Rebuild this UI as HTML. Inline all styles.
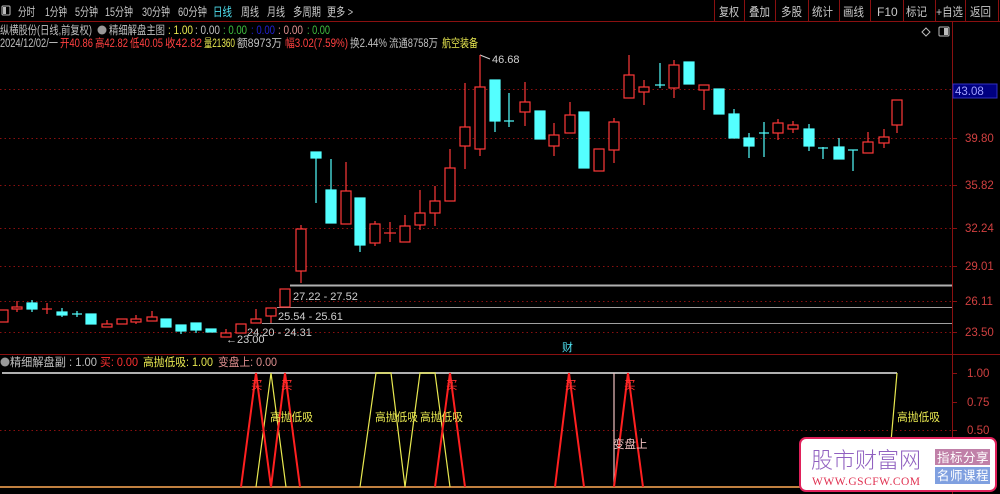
<!DOCTYPE html>
<html><head><meta charset="utf-8"><style>
html,body{margin:0;padding:0;background:#000;width:1000px;height:494px;overflow:hidden}
svg{display:block;font-family:"Liberation Sans","Noto Sans CJK SC",sans-serif}
</style></head><body>
<svg width="1000" height="494" viewBox="0 0 1000 494" xmlns="http://www.w3.org/2000/svg">
<rect width="1000" height="494" fill="#000"/>
<!-- top bar -->
<line x1="0" y1="21.5" x2="1000" y2="21.5" stroke="#8a1010"/>
<rect x="2" y="6" width="8" height="9" fill="none" stroke="#bbb" rx="1"/><rect x="3" y="7" width="3" height="7" fill="#bbb"/>
<g font-size="12" fill="#c8c8c8" lengthAdjust="spacingAndGlyphs">
<text x="18" y="16" textLength="17" lengthAdjust="spacingAndGlyphs">分时</text>
<text x="45" y="16" textLength="22" lengthAdjust="spacingAndGlyphs">1分钟</text>
<text x="75" y="16" textLength="23" lengthAdjust="spacingAndGlyphs">5分钟</text>
<text x="105" y="16" textLength="28" lengthAdjust="spacingAndGlyphs">15分钟</text>
<text x="142" y="16" textLength="28" lengthAdjust="spacingAndGlyphs">30分钟</text>
<text x="178" y="16" textLength="29" lengthAdjust="spacingAndGlyphs">60分钟</text>
<text x="213" y="16" fill="#4fe0f0" textLength="19" lengthAdjust="spacingAndGlyphs">日线</text>
<text x="241" y="16" textLength="18" lengthAdjust="spacingAndGlyphs">周线</text>
<text x="267" y="16" textLength="18" lengthAdjust="spacingAndGlyphs">月线</text>
<text x="293" y="16" textLength="28" lengthAdjust="spacingAndGlyphs">多周期</text>
<text x="327" y="16" textLength="26" lengthAdjust="spacingAndGlyphs">更多 &gt;</text>
</g>
<g stroke="#8a1010"><line x1="714.5" y1="0" x2="714.5" y2="21"/><line x1="744.5" y1="0" x2="744.5" y2="21"/><line x1="775.5" y1="0" x2="775.5" y2="21"/><line x1="808.5" y1="0" x2="808.5" y2="21"/><line x1="839.5" y1="0" x2="839.5" y2="21"/><line x1="870.5" y1="0" x2="870.5" y2="21"/><line x1="903.5" y1="0" x2="903.5" y2="21"/><line x1="935.5" y1="0" x2="935.5" y2="21"/><line x1="965.5" y1="0" x2="965.5" y2="21"/><line x1="998.5" y1="0" x2="998.5" y2="21"/></g>
<g font-size="12" fill="#c8c8c8">
<text x="719" y="16" textLength="20" lengthAdjust="spacingAndGlyphs">复权</text><text x="749" y="16" textLength="21" lengthAdjust="spacingAndGlyphs">叠加</text><text x="781" y="16" textLength="21" lengthAdjust="spacingAndGlyphs">多股</text><text x="812" y="16" textLength="21" lengthAdjust="spacingAndGlyphs">统计</text><text x="843" y="16" textLength="21" lengthAdjust="spacingAndGlyphs">画线</text><text x="877" y="16">F10</text><text x="906" y="16" textLength="21" lengthAdjust="spacingAndGlyphs">标记</text><text x="936" y="16" textLength="27" lengthAdjust="spacingAndGlyphs">+自选</text><text x="970" y="16" textLength="21" lengthAdjust="spacingAndGlyphs">返回</text>
</g>
<!-- info lines -->
<g font-size="11.5">
<text x="0" y="34" fill="#c0c0c0" textLength="92" lengthAdjust="spacingAndGlyphs">纵横股份(日线,前复权)</text>
<circle cx="102" cy="30" r="4.5" fill="#999"/>
<text x="109" y="34" fill="#c0c0c0" textLength="56" lengthAdjust="spacingAndGlyphs">精细解盘主图</text>
<text x="168" y="34" fill="#e8e850" textLength="25" lengthAdjust="spacingAndGlyphs">: 1.00</text>
<text x="195" y="34" fill="#c0c0c0" textLength="25" lengthAdjust="spacingAndGlyphs">: 0.00</text>
<text x="223" y="34" fill="#40c040" textLength="24" lengthAdjust="spacingAndGlyphs">: 0.00</text>
<text x="251" y="34" fill="#2020d0" textLength="24" lengthAdjust="spacingAndGlyphs">: 0.00</text>
<text x="278" y="34" fill="#e09090" textLength="25" lengthAdjust="spacingAndGlyphs">: 0.00</text>
<text x="307" y="34" fill="#40c040" textLength="23" lengthAdjust="spacingAndGlyphs">: 0.00</text>
<text x="0" y="47" fill="#c0c0c0" textLength="58" lengthAdjust="spacingAndGlyphs">2024/12/02/一</text>
<text x="60" y="47" fill="#ff4040" textLength="33" lengthAdjust="spacingAndGlyphs">开40.86</text>
<text x="95" y="47" fill="#ff4040" textLength="33" lengthAdjust="spacingAndGlyphs">高42.82</text>
<text x="130" y="47" fill="#ff4040" textLength="33" lengthAdjust="spacingAndGlyphs">低40.05</text>
<text x="165" y="47" fill="#ff4040" textLength="37" lengthAdjust="spacingAndGlyphs">收42.82</text>
<text x="204" y="47" fill="#e8e850" textLength="31" lengthAdjust="spacingAndGlyphs">量21360</text>
<text x="237" y="47" fill="#c0c0c0" textLength="45" lengthAdjust="spacingAndGlyphs">额8973万</text>
<text x="285" y="47" fill="#ff4040" textLength="63" lengthAdjust="spacingAndGlyphs">幅3.02(7.59%)</text>
<text x="350" y="47" fill="#c0c0c0" textLength="37" lengthAdjust="spacingAndGlyphs">换2.44%</text>
<text x="389" y="47" fill="#c0c0c0" textLength="49" lengthAdjust="spacingAndGlyphs">流通8758万</text>
<text x="442" y="47" fill="#e8e850" textLength="36" lengthAdjust="spacingAndGlyphs">航空装备</text>
</g>
<path d="M922 32 l4 -4 4 4 -4 4z" fill="none" stroke="#bbb"/>
<rect x="939" y="27" width="10" height="9" fill="none" stroke="#bbb" rx="1"/><rect x="944" y="28" width="4" height="7" fill="#bbb"/>
<!-- axis -->
<line x1="952.5" y1="22" x2="952.5" y2="494" stroke="#8a1010"/>
<g stroke="#8a1010" stroke-dasharray="1.5 3">
<line x1="0" y1="89.5" x2="952" y2="89.5"/><line x1="0" y1="138.5" x2="952" y2="138.5"/><line x1="0" y1="185.5" x2="952" y2="185.5"/><line x1="0" y1="228.5" x2="952" y2="228.5"/><line x1="0" y1="266.5" x2="952" y2="266.5"/><line x1="0" y1="301.5" x2="952" y2="301.5"/><line x1="0" y1="332.5" x2="952" y2="332.5"/>
<line x1="0" y1="430.5" x2="952" y2="430.5"/>
</g>
<g stroke="#8a1010"><line x1="952" y1="138.5" x2="957" y2="138.5"/><line x1="952" y1="185.5" x2="957" y2="185.5"/><line x1="952" y1="228.5" x2="957" y2="228.5"/><line x1="952" y1="266.5" x2="957" y2="266.5"/><line x1="952" y1="301.5" x2="957" y2="301.5"/><line x1="952" y1="332.5" x2="957" y2="332.5"/><line x1="952" y1="373.5" x2="957" y2="373.5"/><line x1="952" y1="402.5" x2="957" y2="402.5"/><line x1="952" y1="430.5" x2="957" y2="430.5"/></g>
<g font-size="11.5" fill="#d04040">
<text x="965" y="142">39.80</text><text x="965" y="189">35.82</text><text x="965" y="232">32.24</text><text x="965" y="270">29.01</text><text x="965" y="305">26.11</text><text x="965" y="336">23.50</text>
<text x="967" y="377">1.00</text><text x="967" y="406">0.75</text><text x="967" y="434">0.50</text>
</g>
<rect x="953" y="84" width="44" height="14" fill="#000080" stroke="#3030c0"/>
<text x="955" y="95" font-size="11.5" fill="#a0a0ff">43.08</text>
<!-- support lines -->
<line x1="290" y1="285.5" x2="952" y2="285.5" stroke="#b0b0b0" stroke-width="2"/>
<line x1="277" y1="307.5" x2="952" y2="307.5" stroke="#a0a0a0"/>
<line x1="262" y1="323.5" x2="952" y2="323.5" stroke="#a0a0a0"/>
<g font-size="11" fill="#d0d0d0">
<text x="293" y="300">27.22 - 27.52</text><text x="278" y="320">25.54 - 25.61</text><text x="247" y="336">24.20 - 24.31</text><text x="226" y="343">←23.00</text><text x="492" y="63">46.68</text>
</g>
<path d="M480 55 l10 4" stroke="#d0d0d0" fill="none"/>
<!-- candles -->
<g stroke-width="1.2">
<g stroke="#ff3838" fill="#000">
<rect x="-2" y="310" width="10" height="12"/>
<line x1="17" y1="301" x2="17" y2="312"/><rect x="12" y="307" width="10" height="2"/>
<line x1="47" y1="303" x2="47" y2="314"/><line x1="42" y1="309" x2="52" y2="309"/>
<line x1="107" y1="320" x2="107" y2="324"/><rect x="102" y="324" width="10" height="3"/>
<rect x="117" y="319" width="10" height="5"/>
<line x1="136" y1="315" x2="136" y2="324"/><rect x="131" y="319" width="10" height="3"/>
<line x1="152" y1="311" x2="152" y2="317"/><rect x="147" y="317" width="10" height="4"/>
<line x1="226" y1="329" x2="226" y2="333"/><rect x="221" y="333" width="10" height="4"/>
<rect x="236" y="324" width="10" height="9"/>
<line x1="256" y1="309" x2="256" y2="319"/><rect x="251" y="319" width="10" height="4"/>
<line x1="271" y1="316" x2="271" y2="323"/><rect x="266" y="308" width="10" height="8"/>
<rect x="280" y="289" width="10" height="18"/>
<line x1="301" y1="225" x2="301" y2="283"/><rect x="296" y="229" width="10" height="42"/>
<line x1="346" y1="162" x2="346" y2="191"/><rect x="341" y="191" width="10" height="33"/>
<line x1="375" y1="221" x2="375" y2="246"/><rect x="370" y="224" width="10" height="19"/>
<line x1="390" y1="222" x2="390" y2="242"/><line x1="384" y1="233" x2="396" y2="233"/>
<line x1="405" y1="215" x2="405" y2="226"/><rect x="400" y="226" width="10" height="16"/>
<line x1="420" y1="190" x2="420" y2="230"/><rect x="415" y="213" width="10" height="12"/>
<line x1="435" y1="186" x2="435" y2="226"/><rect x="430" y="201" width="10" height="12"/>
<line x1="450" y1="149" x2="450" y2="168"/><rect x="445" y="168" width="10" height="33"/>
<line x1="465" y1="83" x2="465" y2="169"/><rect x="460" y="127" width="10" height="19"/>
<line x1="480" y1="55" x2="480" y2="156"/><rect x="475" y="87" width="10" height="62"/>
<line x1="525" y1="82" x2="525" y2="126"/><rect x="520" y="102" width="10" height="10"/>
<line x1="554" y1="123" x2="554" y2="156"/><rect x="549" y="135" width="10" height="11"/>
<line x1="570" y1="102" x2="570" y2="115"/><rect x="565" y="115" width="10" height="18"/>
<rect x="594" y="149" width="10" height="22"/>
<line x1="614" y1="118" x2="614" y2="163"/><rect x="609" y="122" width="10" height="28"/>
<line x1="629" y1="55" x2="629" y2="75"/><rect x="624" y="75" width="10" height="23"/>
<line x1="644" y1="80" x2="644" y2="105"/><rect x="639" y="87" width="10" height="5"/>
<line x1="674" y1="60" x2="674" y2="98"/><rect x="669" y="65" width="10" height="23"/>
<line x1="704" y1="90" x2="704" y2="110"/><rect x="699" y="85" width="10" height="5"/>
<line x1="778" y1="119" x2="778" y2="140"/><rect x="773" y="123" width="10" height="10"/>
<line x1="793" y1="121" x2="793" y2="133"/><rect x="788" y="125" width="10" height="4"/>
<line x1="868" y1="132" x2="868" y2="142"/><rect x="863" y="142" width="10" height="11"/>
<line x1="884" y1="129" x2="884" y2="148"/><rect x="879" y="137" width="10" height="6"/>
<line x1="897" y1="125" x2="897" y2="133"/><rect x="892" y="100" width="10" height="25"/>
</g>
<g stroke="#54ffff" fill="#54ffff">
<rect x="27" y="303" width="10" height="6"/><line x1="32" y1="300" x2="32" y2="312"/>
<rect x="57" y="312" width="10" height="3"/><line x1="62" y1="308" x2="62" y2="317"/>
<line x1="72" y1="314" x2="82" y2="314"/><line x1="77" y1="311" x2="77" y2="317"/>
<rect x="86" y="314" width="10" height="10"/>
<rect x="161" y="319" width="10" height="8"/>
<rect x="176" y="325" width="10" height="6"/><line x1="181" y1="331" x2="181" y2="334"/>
<rect x="191" y="323" width="10" height="7"/><line x1="196" y1="330" x2="196" y2="333"/>
<rect x="206" y="329" width="10" height="3"/>
<rect x="311" y="152" width="10" height="6"/><line x1="316" y1="158" x2="316" y2="203"/>
<rect x="326" y="190" width="10" height="33"/><line x1="331" y1="159" x2="331" y2="190"/>
<rect x="355" y="198" width="10" height="47"/><line x1="360" y1="245" x2="360" y2="252"/>
<rect x="490" y="80" width="10" height="41"/><line x1="495" y1="121" x2="495" y2="132"/>
<line x1="504" y1="121" x2="514" y2="121"/><line x1="509" y1="93" x2="509" y2="127"/>
<rect x="535" y="111" width="10" height="28"/>
<rect x="579" y="112" width="10" height="56"/>
<line x1="655" y1="85" x2="665" y2="85"/><line x1="660" y1="63" x2="660" y2="88"/>
<rect x="684" y="62" width="10" height="22"/>
<rect x="714" y="89" width="10" height="25"/>
<rect x="729" y="114" width="10" height="24"/><line x1="734" y1="109" x2="734" y2="114"/>
<rect x="744" y="138" width="10" height="8"/><line x1="749" y1="133" x2="749" y2="158"/>
<line x1="759" y1="133" x2="769" y2="133"/><line x1="764" y1="122" x2="764" y2="157"/>
<rect x="804" y="129" width="10" height="17"/><line x1="809" y1="124" x2="809" y2="151"/>
<line x1="818" y1="148" x2="828" y2="148"/><line x1="823" y1="147" x2="823" y2="159"/>
<rect x="834" y="147" width="10" height="12"/><line x1="839" y1="138" x2="839" y2="147"/>
<line x1="848" y1="150" x2="858" y2="150"/><line x1="853" y1="150" x2="853" y2="171"/>
</g>
</g>
<text x="562" y="351" font-size="11" fill="#4fe0f0">财</text>
<!-- sub panel -->
<line x1="0" y1="354.5" x2="1000" y2="354.5" stroke="#8a1010"/>
<circle cx="5" cy="362" r="4.5" fill="#999"/>
<g font-size="11.5">
<text x="10" y="366" fill="#c0c0c0" textLength="87" lengthAdjust="spacingAndGlyphs">精细解盘副 : 1.00</text>
<text x="100" y="366" fill="#ff3030" textLength="38" lengthAdjust="spacingAndGlyphs">买: 0.00</text>
<text x="143" y="366" fill="#e8e850" textLength="70" lengthAdjust="spacingAndGlyphs">高抛低吸: 1.00</text>
<text x="218" y="366" fill="#e09090" textLength="59" lengthAdjust="spacingAndGlyphs">变盘上: 0.00</text>
</g>
<polyline points="2,373 897,373" stroke="#b0b0b0" stroke-width="2" fill="none"/>
<line x1="0" y1="487" x2="952" y2="487" stroke="#c08040" stroke-width="2"/>
<line x1="614" y1="373" x2="614" y2="487" stroke="#f0c0c0" stroke-width="1.2"/>
<g fill="none" stroke="#e8e850" stroke-width="1.2">
<polyline points="256,487 271,373 286,487"/>
<polyline points="360,487 376,373 391,373 405,487 420,373 435,373 450,487"/>
<polyline points="887,487 897,373"/>
</g>
<g fill="none" stroke="#ff2020" stroke-width="2">
<polyline points="241,487 256,373 271,487 285,373 300,487"/>
<polyline points="435,487 450,373 465,487"/>
<polyline points="555,487 569,373 584,487"/>
<polyline points="614,487 628,373 643,487"/>
</g>
<g font-size="11.5" fill="#ff3030">
<text x="251" y="389">买</text><text x="281" y="389">买</text><text x="446" y="389">买</text><text x="565" y="389">买</text><text x="624" y="389">买</text>
</g>
<g font-size="11.5" fill="#e8e850">
<text x="270" y="421" textLength="43" lengthAdjust="spacingAndGlyphs">高抛低吸</text><text x="375" y="421" textLength="43" lengthAdjust="spacingAndGlyphs">高抛低吸</text><text x="420" y="421" textLength="43" lengthAdjust="spacingAndGlyphs">高抛低吸</text><text x="897" y="421" textLength="43" lengthAdjust="spacingAndGlyphs">高抛低吸</text>
</g>
<text x="613" y="448" font-size="11.5" fill="#f0c0c0">变盘上</text>
<!-- watermark -->
<rect x="800" y="438" width="196" height="53" rx="6" fill="#fff" stroke="#e0205a" stroke-width="2"/>
<text x="811" y="468" font-size="22" fill="#9060c0" font-family="'Noto Sans CJK SC',sans-serif" font-weight="300">股市财富网</text>
<text x="812" y="485" font-size="11.5" fill="#e03050" font-family="'Liberation Serif',serif" letter-spacing="0.5">WWW.GSCFW.COM</text>
<rect x="935" y="449" width="55" height="16" fill="#c080a8"/>
<text x="937" y="462" font-size="12.5" fill="#fff" letter-spacing="0.5">指标分享</text>
<rect x="935" y="467" width="55" height="17" fill="#80a0e0"/>
<text x="937" y="480" font-size="12.5" fill="#fff" letter-spacing="0.5">名师课程</text>
</svg>
</body></html>
